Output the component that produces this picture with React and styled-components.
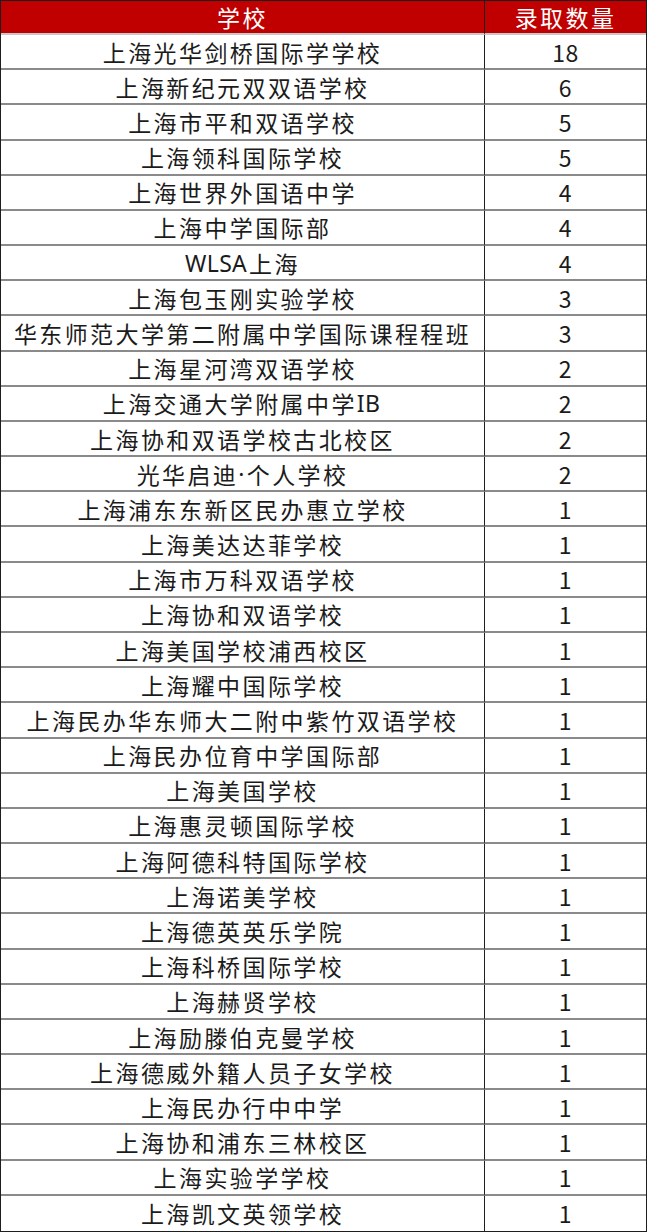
import React from "react";
import styled, { createGlobalStyle } from "styled-components";

const Global = createGlobalStyle`
  html, body { margin: 0; padding: 0; background: #fff; }
  body { font-family: "Noto Sans CJK SC", "Noto Sans", sans-serif; }
`;

const rows = [
  ["上海光华剑桥国际学学校", 18],
  ["上海新纪元双双语学校", 6],
  ["上海市平和双语学校", 5],
  ["上海领科国际学校", 5],
  ["上海世界外国语中学", 4],
  ["上海中学国际部", 4],
  ["WLSA上海", 4],
  ["上海包玉刚实验学校", 3],
  ["华东师范大学第二附属中学国际课程程班", 3],
  ["上海星河湾双语学校", 2],
  ["上海交通大学附属中学IB", 2],
  ["上海协和双语学校古北校区", 2],
  ["光华启迪·个人学校", 2],
  ["上海浦东东新区民办惠立学校", 1],
  ["上海美达达菲学校", 1],
  ["上海市万科双语学校", 1],
  ["上海协和双语学校", 1],
  ["上海美国学校浦西校区", 1],
  ["上海耀中国际学校", 1],
  ["上海民办华东师大二附中紫竹双语学校", 1],
  ["上海民办位育中学国际部", 1],
  ["上海美国学校", 1],
  ["上海惠灵顿国际学校", 1],
  ["上海阿德科特国际学校", 1],
  ["上海诺美学校", 1],
  ["上海德英英乐学院", 1],
  ["上海科桥国际学校", 1],
  ["上海赫贤学校", 1],
  ["上海励滕伯克曼学校", 1],
  ["上海德威外籍人员子女学校", 1],
  ["上海民办行中中学", 1],
  ["上海协和浦东三林校区", 1],
  ["上海实验学学校", 1],
  ["上海凯文英领学校", 1],
];

const Table = styled.div`
  box-sizing: border-box;
  width: 647px;
  height: 1232px;
  border: 1px solid #1e1e1e;
  display: grid;
  grid-template-columns: 484px 1fr;
  grid-template-rows: 34px repeat(34, 1fr);
`;

const Cell = styled.div`
  box-sizing: border-box;
  display: flex;
  align-items: center;
  justify-content: center;
  white-space: nowrap;
  font-size: 23px;
  letter-spacing: ${(p) => (p.$num ? "0.5px" : "2.4px")};
  line-height: 1;
  padding-top: 1px;
  color: ${(p) => (p.$head ? "#ffffff" : "#1b1b1b")};
  background: ${(p) => (p.$head ? "#c00000" : "#ffffff")};
  border-bottom: ${(p) =>
    p.$last ? "none" : p.$head ? "2px solid #c8c8c8" : "2px solid #8a8a8a"};
  border-right: ${(p) => (p.$first ? "1px solid #1e1e1e" : "none")};
  overflow: hidden;
`;

const Latin = styled.span`
  font-family: "Noto Sans", "Open Sans", sans-serif;
  letter-spacing: 0.3px;
  margin-right: 2px;
`;

function Name({ text }) {
  const parts = text.split(/([A-Za-z·]+)/).filter(Boolean);
  return parts.map((p, i) =>
    /^[A-Za-z·]+$/.test(p) ? <Latin key={i}>{p}</Latin> : <span key={i}>{p}</span>
  );
}

export default function App() {
  return (
    <>
      <Global />
      <Table>
        <Cell $head $first>学校</Cell>
        <Cell $head>录取数量</Cell>
        {rows.map(([name, n], i) => {
          const last = i === rows.length - 1;
          return (
            <React.Fragment key={name + i}>
              <Cell $first $last={last}><Name text={name} /></Cell>
              <Cell $num $last={last}>{n}</Cell>
            </React.Fragment>
          );
        })}
      </Table>
    </>
  );
}
